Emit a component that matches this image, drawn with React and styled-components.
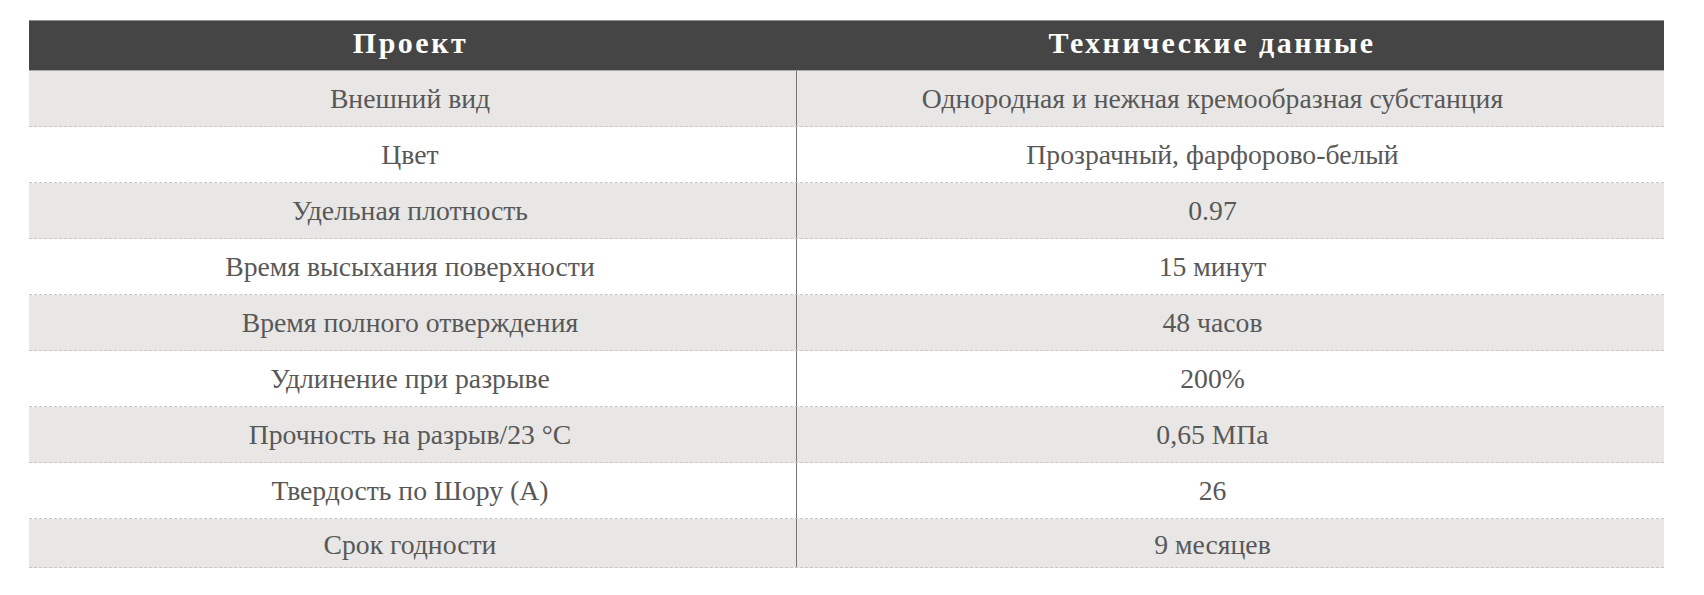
import React from "react";
import styled, { createGlobalStyle } from "styled-components";

const Global = createGlobalStyle`
  html, body { margin: 0; padding: 0; background: #fff; }
  body { font-family: "Liberation Serif", "Times New Roman", serif; }
`;

const Page = styled.div`
  padding: 20px 40px 0 29px;
`;

const Table = styled.div`
  width: 1635px;
  display: flex;
  flex-direction: column;
`;

const HeaderRow = styled.div`
  display: grid;
  grid-template-columns: 767px 1fr;
  height: 49px;
  background: #454545;
  border-top: 1px solid #8e8e8e;
  border-bottom: 1px solid #a9a9a9;
`;

const HeaderCell = styled.div`
  display: flex;
  align-items: center;
  justify-content: center;
  color: #fff;
  font-weight: bold;
  font-size: 30px;
  letter-spacing: 2.5px;
  padding-bottom: 5px;
  padding-right: ${(p) => (p.$right ? "36px" : "4px")};
`;

const Cell = styled.div`
  display: flex;
  align-items: center;
  justify-content: center;
  color: #585858;
  font-size: 27.7px;
  padding-right: ${(p) => (p.$right ? "36px" : "5px")};
  border-left: ${(p) => (p.$right ? "1px solid #7a7373" : "none")};
`;

const Row = styled.div`
  display: grid;
  grid-template-columns: 767px 1fr;
  height: 55px;
  background: ${(p) => (p.$shade ? "#e8e7e5" : "#ffffff")};
  border-bottom: 1px dashed #c9c5c3;

  &:last-child {
    height: 48px;
  }

  &:last-child > ${Cell} {
    padding-top: 4px;
  }
`;

const rows = [
  ["Внешний вид", "Однородная и нежная кремообразная субстанция"],
  ["Цвет", "Прозрачный, фарфорово-белый"],
  ["Удельная плотность", "0.97"],
  ["Время высыхания поверхности", "15 минут"],
  ["Время полного отверждения", "48 часов"],
  ["Удлинение при разрыве", "200%"],
  ["Прочность на разрыв/23 °C", "0,65 МПа"],
  ["Твердость по Шору (A)", "26"],
  ["Срок годности", "9 месяцев"],
];

export default function App() {
  return (
    <Page>
      <Global />
      <Table>
        <HeaderRow>
          <HeaderCell>Проект</HeaderCell>
          <HeaderCell $right>Технические данные</HeaderCell>
        </HeaderRow>
        {rows.map(([a, b], i) => (
          <Row key={a} $shade={i % 2 === 0}>
            <Cell>{a}</Cell>
            <Cell $right>{b}</Cell>
          </Row>
        ))}
      </Table>
    </Page>
  );
}
